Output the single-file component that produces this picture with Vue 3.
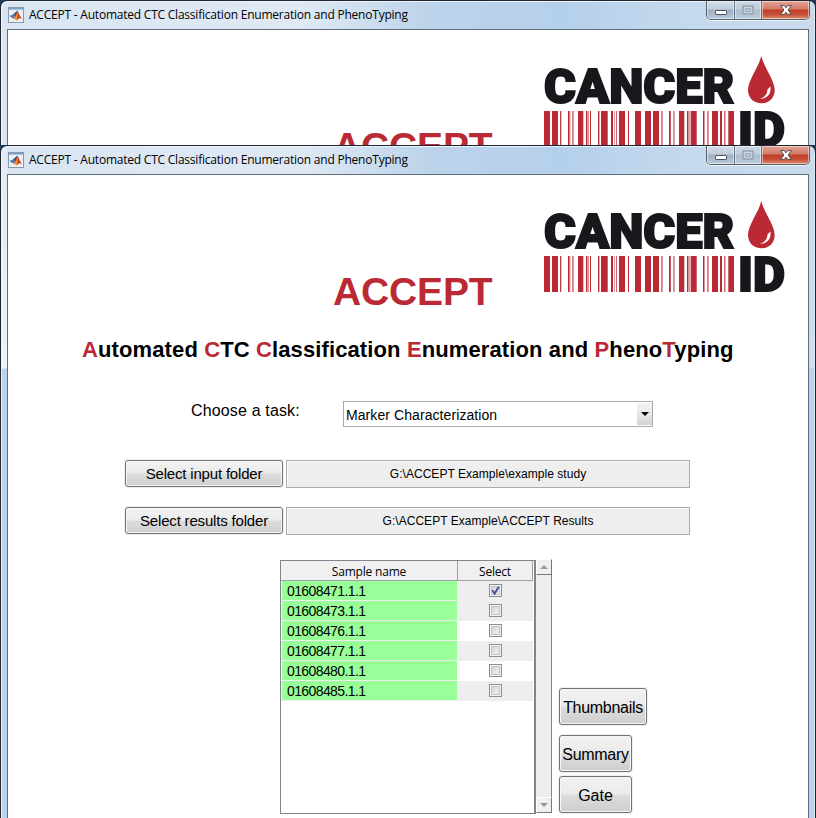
<script setup>
import { reactive } from 'vue'

const title = 'ACCEPT - Automated CTC Classification Enumeration and PhenoTyping'

const windows = [
  { id: 'back', front: false },
  { id: 'front', front: true }
]

const subtitle = [
  ['A', 'utomated '],
  ['C', 'TC '],
  ['C', 'lassification '],
  ['E', 'numeration and '],
  ['P', 'heno'],
  ['T', 'yping']
]

const folders = [
  { label: 'Select input folder', path: 'G:\\ACCEPT Example\\example study' },
  { label: 'Select results folder', path: 'G:\\ACCEPT Example\\ACCEPT Results' }
]

const samples = reactive([
  { name: '01608471.1.1', selected: true, white: false },
  { name: '01608473.1.1', selected: false, white: false },
  { name: '01608476.1.1', selected: false, white: true },
  { name: '01608477.1.1', selected: false, white: false },
  { name: '01608480.1.1', selected: false, white: true },
  { name: '01608485.1.1', selected: false, white: false }
])

// barcode stripes: [x, width, opacity]
const bars = [
  [4, 6, 1], [12, 6, 1], [20, 1, 0.9], [21, 1, 0.3], [28, 1.6, 1], [30, 0.6, 0.4], [32, 1.8, 0.6],
  [38, 5.3, 1], [46, 1.5, 1], [48, 0.8, 0.6], [50, 1, 1], [58, 1.4, 1], [61, 6.7, 1],
  [71, 2, 1], [74, 0.8, 0.6], [76, 1, 0.7], [79, 6, 1], [88, 1, 1], [95, 6, 1],
  [105, 6, 1], [113, 6, 1], [121, 1.8, 0.6], [129, 1.8, 1], [133, 1.8, 0.55], [139, 5.3, 1],
  [147, 1.5, 1], [149, 0.8, 0.6], [150.7, 6, 1], [163, 1.5, 1], [167, 1.8, 0.6], [172, 6, 1],
  [180, 2, 1], [184, 1.6, 0.65], [188.3, 5.7, 1]
]
</script>

<template>
  <main class="desktop">
    <section v-for="w in windows" :key="w.id" class="window" :class="w.id">
      <header class="titlebar">
        <svg class="app-icon" viewBox="0 0 16 16">
          <rect x="0.5" y="0.5" width="15" height="15" fill="#eceff3" stroke="#8a97a8" />
          <rect x="1" y="1" width="14" height="1.6" fill="#7fa3cf" />
          <path d="M1.5 9 L5 7.4 L7 9.2 L4.6 11.2 Z" fill="#3d7fb8" />
          <path d="M5 7.4 L9.4 3.4 L8.4 8.6 L7 9.2 Z" fill="#275680" />
          <path d="M9.4 3.4 C10.6 5 11.7 9.3 14 12 C12 10.7 10.8 10.9 8.6 13.6 C7.8 12 7 11.5 4.6 11.2 C7.6 9.4 8.3 6.5 9.4 3.4 Z" fill="#c9401c" />
          <path d="M9.4 4.5 C9.6 7 9.7 9.5 8.6 13.6 C7.8 12 7 11.5 6 11.3 C8 9.6 8.9 7 9.4 4.5 Z" fill="#f39a3a" />
        </svg>
        <span class="title">{{ title }}</span>
        <div class="controls">
          <span class="ctl min"><svg viewBox="0 0 12 5"><rect x="0.5" y="0.5" width="11" height="4" rx="0.6" fill="#fff" stroke="#4b5262" /></svg></span>
          <span class="ctl max"><svg viewBox="0 0 12 10"><rect x="1" y="1" width="10" height="8" fill="none" stroke="#96a2af" stroke-width="1.4" /><rect x="2.2" y="2.2" width="7.6" height="5.6" fill="#ccd6df" /><rect x="3.7" y="3.7" width="4.6" height="2.6" fill="#c8d4de" stroke="#96a2af" /></svg></span>
          <span class="ctl close"><svg viewBox="0 0 12 10"><path d="M0.7 0.6H4.2L6 2.8L7.8 0.6H11.3L8.1 5L11.3 9.4H7.8L6 7.2L4.2 9.4H0.7L3.9 5Z" fill="#fff" stroke="#5a4c58" stroke-width="1" /></svg></span>
        </div>
      </header>

      <div class="client">
        <div class="banner">
          <h1>ACCEPT</h1>
          <svg class="logo" viewBox="0 0 250 100">
            <text class="logo-text" x="4" y="53.1" textLength="190.4" lengthAdjust="spacingAndGlyphs">CANCER</text>
            <text class="logo-text" x="198" y="96.4" textLength="47" lengthAdjust="spacingAndGlyphs">ID</text>
            <rect v-for="(b, i) in bars" :key="i" :x="b[0]" y="61" :width="b[1]" height="36" :opacity="b[2]" fill="#ba2934" />
            <path d="M221.3 5.8 C219 17 208 30 208 40 C208 48 214 53.3 221.3 53.3 C229 53.3 234.7 48 234.7 40 C234.7 30 223.6 17 221.3 5.8 Z" fill="#ba2934" />
            <path d="M230.4 36.5 C231.6 44 227 49.6 218.6 48.6 C223 48.6 227.6 45 227.4 39.4 C228.4 38.6 229.6 37.6 230.4 36.5 Z" fill="#fff" />
          </svg>
        </div>

        <template v-if="w.front">
          <h2><template v-for="(p, i) in subtitle" :key="i"><em>{{ p[0] }}</em>{{ p[1] }}</template></h2>

          <div class="task">
            <label>Choose a task:</label>
            <div class="select">
              <span>Marker Characterization</span>
              <i><svg viewBox="0 0 8 4"><path d="M0 0H8L4 4Z" fill="#000" /></svg></i>
            </div>
          </div>

          <div v-for="f in folders" :key="f.label" class="folder">
            <button class="btn">{{ f.label }}</button>
            <div class="path">{{ f.path }}</div>
          </div>

          <div class="bottom">
            <div class="table">
              <div class="row head"><span class="name">Sample name</span><span class="pick">Select</span></div>
              <div v-for="s in samples" :key="s.name" class="row" :class="{ white: s.white }">
                <span class="name">{{ s.name }}</span>
                <span class="pick">
                  <span class="box" @click="s.selected = !s.selected">
                    <svg v-if="s.selected" viewBox="0 0 13 13"><path d="M3.3 6.2L5.6 9.6L9.8 2.8" fill="none" stroke="#3f559b" stroke-width="2" /></svg>
                  </span>
                </span>
              </div>
            </div>
            <div class="scroll">
              <span class="arrow"><svg viewBox="0 0 8 4"><path d="M0 4H8L4 0Z" fill="#9a9a9a" /></svg></span>
              <span class="arrow"><svg viewBox="0 0 8 4"><path d="M0 0H8L4 4Z" fill="#9a9a9a" /></svg></span>
            </div>
            <div class="actions">
              <button class="btn thumbs">Thumbnails</button>
              <button class="btn summary">Summary</button>
              <button class="btn gate">Gate</button>
            </div>
          </div>
        </template>
      </div>
    </section>
  </main>
</template>

<style>
body { margin: 0; overflow: hidden; background: #1c3d5c; }
</style>

<style scoped>
* { box-sizing: border-box; }
.desktop {
  width: 816px;
  height: 818px;
  overflow: hidden;
  display: flex;
  flex-direction: column;
  font-family: "Liberation Sans", Arial, sans-serif;
  color: #000;
}
.window {
  flex: none;
  width: 816px;
  padding: 0 6px;
  overflow: hidden;
  border: 1px solid #20242e;
  border-bottom: 0;
  border-radius: 7px 7px 0 0;
  box-shadow: inset 1px 1px 0 #eef5fc, inset -1px 0 0 #dceaf6;
}
.back {
  height: 145px;
  background: linear-gradient(90deg, #d9e5f2 0, #dfe9f4 300px, #bcd3ea 430px, #b5d0eb 560px, #c5d9ed 690px, #c9daec 100%);
}
.front {
  height: 673px;
  background:
    linear-gradient(#e3eaf6 0, #eef2fa 222px, #b9d1ea 223px) 0 29px / 6px 100% no-repeat,
    linear-gradient(#c9daec 0, #cfdded 222px, #b9d1ea 223px) 100% 29px / 6px 100% no-repeat,
    linear-gradient(90deg, #d9e5f2 0, #dfe9f4 300px, #bcd3ea 430px, #b5d0eb 560px, #c5d9ed 690px, #c9daec 100%);
  background-position: 0 0, 100% 0, 0 0;
}
.titlebar {
  height: 28px;
  display: flex;
  align-items: flex-start;
}
.app-icon { width: 16px; height: 16px; margin: 6px 0 0 1px; }
.title {
  flex: 1;
  margin: 4px 0 0 5px;
  font: 12px/20px "Open Sans", "Noto Sans", sans-serif;
  letter-spacing: -0.22px;
  white-space: nowrap;
}
.controls {
  display: flex;
  width: 104px;
  height: 19px;
  margin-right: -1px;
  border: 1px solid #59616d;
  border-top: 0;
  border-radius: 0 0 5px 5px;
  overflow: hidden;
  box-shadow: 0 1px 0 #eef5fb;
}
.ctl {
  display: flex;
  align-items: center;
  justify-content: center;
  box-shadow: inset 0 0 0 1px rgba(255, 255, 255, 0.5);
}
.min { width: 28px; background: linear-gradient(#d3dee8 0, #bfcddc 45%, #9dafc1 50%, #b7c9da 100%); border-right: 1px solid #69737f; }
.max { width: 27px; background: linear-gradient(#ccd9e6 0, #bfcedd 45%, #abbccd 50%, #bccddd 100%); border-right: 1px solid #69737f; }
.close { flex: 1; background: linear-gradient(#e3a496 0, #d27966 45%, #bd3d24 50%, #c9503a 75%, #dc8d6d 100%); }
.min svg { width: 12px; height: 5px; margin-top: 5px; }
.max svg { width: 12px; height: 10px; }
.close svg { width: 12px; height: 10px; }

.client {
  height: 790px;
  border: 1px solid #5e6c7b;
  background: #fff;
  overflow: hidden;
}
.banner { display: flex; height: 150px; }
h1 {
  flex: 1;
  margin: 94px 0 0 325px;
  font-size: 39px;
  line-height: 46px;
  font-weight: bold;
  letter-spacing: -0.15px;
  color: #ba2934;
}
.logo { width: 250px; height: 100px; margin: 20px 18px 0 0; flex: none; }
.logo-text {
  font-family: Roboto, "Open Sans", sans-serif;
  font-weight: 900;
  font-size: 49px;
  fill: #19171b;
  stroke: #19171b;
  stroke-width: 2;
}
h2 {
  margin: 10px 0 0 74px;
  font-size: 22px;
  line-height: 30px;
  letter-spacing: 0.115px;
  white-space: nowrap;
}
em { font-style: normal; color: #ba2934; }

.task { display: flex; margin: 36px 0 0 183px; height: 26px; }
.task label { width: 152px; font-size: 16px; line-height: 20px; letter-spacing: 0.15px; }
.select {
  width: 310px;
  height: 26px;
  border: 1px solid #a9a9b1;
  display: flex;
  justify-content: space-between;
  font-size: 14px;
  line-height: 26px;
  letter-spacing: 0.08px;
  padding-left: 2px;
}
.select i {
  width: 15px;
  margin: 1px 0 1px 0;
  background: linear-gradient(#f3f3f3, #e8e8e8 50%, #d2d2d2);
  display: flex;
  align-items: center;
  justify-content: center;
}
.select svg { width: 8px; height: 4px; }

.folder { display: flex; align-items: flex-start; margin: 33px 0 0 117px; height: 28px; }
.folder + .folder { margin-top: 19px; }
.btn {
  padding: 0;
  border: 1px solid #737373;
  border-radius: 3px;
  background: linear-gradient(#f2f2f2 0, #ebebeb 49%, #dcdcdc 51%, #cfcfcf 100%);
  box-shadow: inset 0 0 0 1px #f7f7f7, 0 0 0 1px #efefef;
  font-family: "Liberation Sans", Arial, sans-serif;
  color: #000;
  white-space: nowrap;
}
.folder .btn { width: 158px; height: 27px; font-size: 15px; letter-spacing: -0.18px; }
.path {
  width: 404px;
  height: 28px;
  margin-left: 3px;
  border: 1px solid #ababab;
  background: #eee;
  box-shadow: inset 1px 1px 0 #fafafa;
  text-align: center;
  font-size: 12px;
  line-height: 27px;
  letter-spacing: 0.04px;
}

.bottom { display: flex; margin: 24px 0 0 272px; }
.table {
  width: 256px;
  height: 254px;
  margin-top: 1px;
  border: 1px solid #83838b;
  border-right-width: 2px;
}
.row { display: flex; width: 252px; height: 20px; background: #eee; font-size: 14px; letter-spacing: -0.6px; }
.row.white { background: #fff; }
.name {
  width: 175px;
  margin-left: 1px;
  padding-left: 5px;
  line-height: 21px;
  background: #9f9;
  border-bottom: 1px solid #eee;
}
.pick { flex: 1; display: flex; align-items: center; justify-content: center; }
.head {
  background: #f0f0f0;
  border-bottom: 1px solid #a0a0a0;
  border-right: 1px solid #a0a0a0;
  font: 12px/22px "Open Sans", "Noto Sans", sans-serif;
  letter-spacing: -0.2px;
}
.head .name { margin: 0; width: 177px; padding: 0; background: none; border: 0; border-right: 1px solid #a0a0a0; text-align: center; line-height: 22px; }
.head .pick { padding-top: 2px; }
.box {
  width: 13px;
  height: 13px;
  margin-bottom: 1px;
  border: 1px solid #8e8f8f;
  background: linear-gradient(135deg, #cdd0d5, #f6f6f6);
  box-shadow: inset 0 0 0 1px #f4f4f4, inset 0 0 0 2px #c2c6cc;
}
.box svg { display: block; width: 13px; height: 13px; margin: -1px; }
.scroll {
  width: 16px;
  height: 254px;
  background: #eee;
  border-right: 1px solid #83838b;
  display: flex;
  flex-direction: column;
  justify-content: space-between;
}
.arrow {
  height: 16px;
  width: 16px;
  background: #f0f0f0;
  border: 1px solid #fff;
  border-right-color: #777;
  border-bottom-color: #777;
  display: flex;
  align-items: center;
  justify-content: center;
}
.arrow svg { width: 8px; height: 4px; }
.actions { display: flex; flex-direction: column; align-items: flex-start; margin: 129px 0 0 7px; }
.actions .btn { width: 73px; height: 37px; font-size: 16px; padding: 2px 0 0; letter-spacing: -0.3px; }
.actions .thumbs { width: 88px; margin-bottom: 10px; }
.actions .summary { margin-bottom: 4px; }
.actions .gate { letter-spacing: 0; }
</style>
